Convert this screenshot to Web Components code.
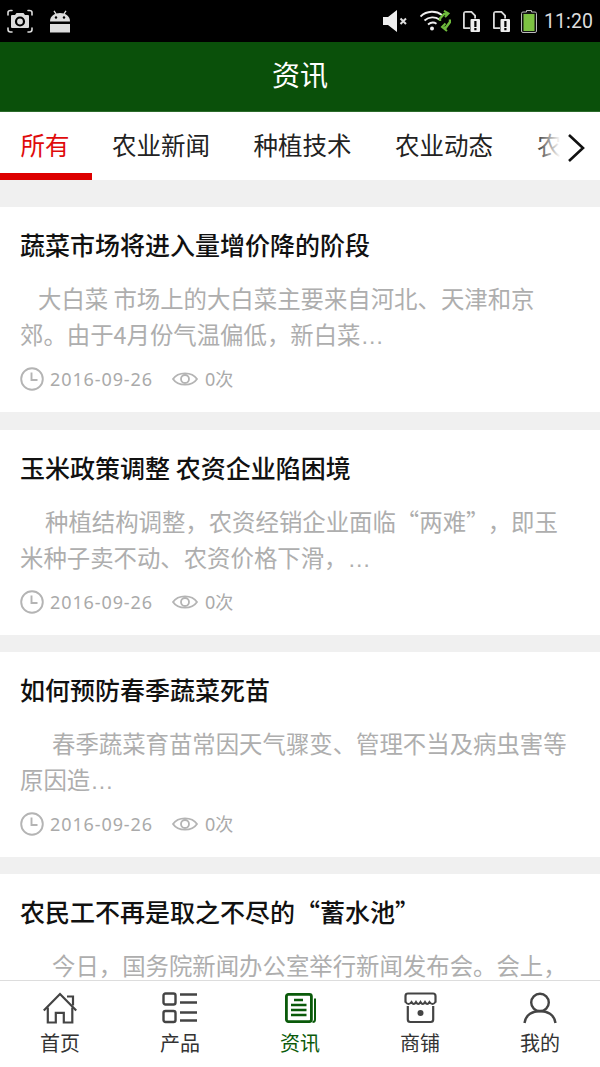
<!DOCTYPE html>
<html lang="zh"><head><meta charset="utf-8"><title>资讯</title>
<style>
html,body{margin:0;padding:0;background:#f0f0f0}
body{width:600px;height:1067px;overflow:hidden;font-family:"Noto Sans CJK SC","Noto Sans",sans-serif;display:flex;flex-direction:column}
main{flex:1;min-height:0;overflow:hidden;display:flex;flex-direction:column;gap:17px;padding-top:27px}
news-card:first-child{margin-bottom:1px}
.dots{font-family:"Liberation Sans",sans-serif;letter-spacing:0}
.fw{padding-right:10px}
</style></head><body>
<status-bar></status-bar>
<app-header>资讯</app-header>
<news-tabs></news-tabs>
<main>
<news-card indent="18" heading="蔬菜市场将进入量增价降的阶段" date="2016-09-26" views="0次">大白菜 市场上的大白菜主要来自河北、天津和京<br>郊。由于4月份气温偏低，新白菜<span class="dots">…</span></news-card>
<news-card indent="25" heading="玉米政策调整 农资企业陷困境" date="2016-09-26" views="0次">种植结构调整，农资经销企业面临<span class="fw">“两难”</span>，即玉<br>米种子卖不动、农资价格下滑，<span class="dots">…</span></news-card>
<news-card indent="32" heading="如何预防春季蔬菜死苗" date="2016-09-26" views="0次">春季蔬菜育苗常因天气骤变、管理不当及病虫害等<br>原因造<span class="dots">…</span></news-card>
<news-card indent="32" clip heading="农民工不再是取之不尽的“蓄水池”">今日，国务院新闻办公室举行新闻发布会。会上，</news-card>
</main>
<bottom-nav></bottom-nav>
<script>
const def=(name,html)=>customElements.define(name,class extends HTMLElement{
  connectedCallback(){ if(this.shadowRoot)return; const r=this.attachShadow({mode:"open"}); r.innerHTML=typeof html==="function"?html(this):html; }
});
const sim=`<svg style="margin-left:MLpx" width="18" height="22" viewBox="0 0 18 22"><path d="M1 4v14q0 1 1 1h6V17.300H2.800V2.800H9l3.200 3.200V8.500H14V5.200L9.800 1H4Q1 1 1 4z" fill="#ddd"/><rect x="8.500" y="9" width="9.500" height="13" rx="1" fill="#eee"/><path d="M12.300 11h2.200v6h-2.200zM12.300 18h2.200v2.200h-2.200z" fill="#000"/></svg>`;
def("status-bar",`<style>
:host{display:flex;align-items:center;flex:none;height:42px;background:#000;color:#ddd;box-sizing:border-box;padding:0 7px 0 7px}
svg{display:block;flex:none}
.sp{flex:1}
.t{font:19.500px/42px Roboto,sans-serif;letter-spacing:.1px;margin-left:7px;padding-top:1px}
</style>
<svg width="26" height="24" viewBox="0 0 26 24"><g fill="none" stroke="#ddd" stroke-width="1.600" stroke-linecap="round"><path d="M1 6V3.500Q1 1.500 3.500 1.500H5"/><path d="M21 1.500h1.500Q25 1.500 25 3.500V6"/><path d="M1 19v1.500Q1 23 3.500 23H5"/><path d="M21 23h1.500Q25 23 25 20.500V19"/></g><path d="M5 6h3l1.500-2h7L18 6h3q1 0 1 1v11q0 1-1 1H5q-1 0-1-1V7q0-1 1-1z" fill="#ddd"/><circle cx="13" cy="12.500" r="4" fill="none" stroke="#000" stroke-width="2.200"/></svg>
<svg style="margin-left:17px" width="20" height="23" viewBox="0 0 20 23"><path d="M4 .8l2 3M16 .8l-2 3" stroke="#ddd" stroke-width="1.300" fill="none"/><path d="M0 11.500C0 6 4.500 3 10 3s10 3 10 8.500z" fill="#ddd"/><circle cx="6" cy="7.500" r="1.200" fill="#000"/><circle cx="14" cy="7.500" r="1.200" fill="#000"/><path d="M0 14h20v8.500H0z" fill="#ddd"/></svg>
<span class="sp"></span>
<svg width="24" height="22" viewBox="0 0 24 22"><path d="M0 7h5l9-7v22l-9-7H0z" fill="#eee"/><path d="M17.500 8.500l5.500 5.500M23 8.500L17.500 14" stroke="#ddd" stroke-width="2"/></svg>
<svg style="margin-left:13px" width="31" height="22" viewBox="0 0 31 22"><g fill="none" stroke="#eee" stroke-width="1.900"><path d="M.5 6.500C7 .5 16 .5 22 5"/><path d="M4.500 10.500C9 6.500 15 6.500 19.500 9.500"/><path d="M8 14.500c3-2.400 6-2.400 8.500-.8"/></g><circle cx="12" cy="18.500" r="2" fill="#eee"/><g fill="none" stroke="#6fbb3c" stroke-width="2.400"><path d="M20 11V8.500l4-4.500 3-.5"/><path d="M24 .8L28.500 3.500 25 7" stroke-width="2"/><path d="M30 9.500v2.500l-4.500 6-1.500-1"/><path d="M27 21L22 17l3.500-3.500" stroke-width="2"/></g></svg>
${sim.replace("ML","11")}
${sim.replace("ML","12")}
<svg style="margin-left:11px" width="16" height="23" viewBox="0 0 16 23"><path d="M5.500 .5h5V2H14q1.500 0 1.500 1.500V21q0 1.500-1.500 1.500H2Q.5 22.500.5 21V3.500Q.5 2 2 2h3.500z" fill="#111" stroke="#bbb" stroke-width="1"/><rect x="2.500" y="4" width="11" height="17" fill="#7dc242"/></svg>
<span class="t">11:20</span>`);

def("app-header",`<style>
:host{display:block;flex:none;height:69px;background:#0a500a;color:#fff;text-align:center;font-size:28px;line-height:64px;border-bottom:1px solid #2b6b2b}
</style><slot></slot>`);

def("news-tabs",`<style>
:host{display:block;flex:none;height:68px;background:#fff;position:relative;overflow:hidden;font-size:24.500px;color:#222}
.row{display:flex;height:68px}
.tab{flex:none;box-sizing:border-box;width:141.500px;text-align:center;line-height:65px;white-space:nowrap}
.tab.on{width:92px;color:#e00b0b;border-bottom:7px solid #dd0000;padding-right:2px}
.tab.on+.tab{margin-left:-1.750px}
.tab.last{width:auto;padding-left:22.250px}
.fade{position:absolute;right:0;top:0;bottom:0;width:66px;background:linear-gradient(to right,rgba(255,255,255,0),#fff 40%);display:flex;align-items:center;justify-content:flex-end;padding:3px 14px 0 0;box-sizing:border-box}
svg{display:block}
</style>
<div class="row"><div class="tab on">所有</div><div class="tab">农业新闻</div><div class="tab">种植技术</div><div class="tab">农业动态</div><div class="tab last">农业</div></div>
<div class="fade"><svg width="19" height="30" viewBox="0 0 19 30"><path d="M2 2l14 13L2 28" fill="none" stroke="#111" stroke-width="2.600"/></svg></div>`);

const meta=h=>h.hasAttribute("date")?`<div class="meta"><svg width="24" height="24" viewBox="0 0 24 24"><circle cx="12" cy="12" r="10.800" fill="none" stroke="#b4b4b4" stroke-width="1.900"/><path d="M11.500 5.500v7.500h6" fill="none" stroke="#b4b4b4" stroke-width="1.900"/></svg><span class="d">${h.getAttribute("date")}</span><svg class="e" width="26" height="20" viewBox="0 0 26 20"><path d="M1 10C6 2.500 20 2.500 25 10C20 17.500 6 17.500 1 10z" fill="none" stroke="#b4b4b4" stroke-width="1.800"/><circle cx="13" cy="10" r="4" fill="none" stroke="#b4b4b4" stroke-width="1.800"/></svg><span class="v">${h.getAttribute("views")}</span></div>`:"";
def("news-card",h=>`<style>
:host{display:block;flex:none;background:#fff;height:205px;box-sizing:border-box;padding:21px 20px 0}
:host([clip]){height:auto;flex:1}
h2{margin:0;font-size:25px;font-weight:500;line-height:32px;color:#111;white-space:nowrap}
p{margin:19.500px 0 0;font-size:23.400px;line-height:36px;color:#aeaeae;text-indent:${h.getAttribute("indent")}px;overflow:hidden;height:72px;white-space:nowrap}
:host([clip]) p{line-height:28px;height:28px;margin-top:23.500px}
.meta{display:flex;align-items:center;height:30px;margin-top:12.500px;color:#aaa;font:18px/30px "Noto Sans","Noto Sans CJK SC",sans-serif}
svg{display:block;flex:none}
.d{margin-left:6px;width:103px;white-space:nowrap;letter-spacing:.9px}
.e{margin-left:19px}
.v{margin-left:7px}
</style>
<h2>${h.getAttribute("heading")}</h2>
<p><slot></slot></p>
${meta(h)}`);

const I={
home:[34,`<g fill="none" stroke="#444" stroke-width="2.200"><path d="M.8 18.500L17 2l16.200 16.500"/><path d="M24 4.500h6v9"/><path d="M4.800 15.500V30.500h8V20.800h8V30.500h8.500V15.500"/></g>`],
list:[36,`<g fill="none" stroke="#444" stroke-width="2.400"><rect x="1.500" y="1.500" width="12" height="11" rx="2"/><rect x="1.500" y="19" width="12" height="11" rx="2"/></g><path d="M18 2.500h17M18 10.500h17M18 20.500h17M18 28.500h17" stroke="#444" stroke-width="2.400" fill="none"/>`],
news:[32,`<rect x="2.400" y="2.400" width="25" height="27.200" rx="2" fill="none" stroke="#0a5a0a" stroke-width="2.800"/><path d="M31 6.500v21q0 2.500-2.500 2.500" fill="none" stroke="#0a5a0a" stroke-width="2"/><path d="M10 8h9M7 13h15.500M7 18h15.500M7 23h15.500" fill="none" stroke="#0a5a0a" stroke-width="2.400"/>`],
shop:[33,`<path d="M1.500 10.500V4Q1.500 1.500 4 1.500h25q2.500 0 2.500 2.500v6.500" fill="none" stroke="#444" stroke-width="2.200"/><path d="M3.800 14v13.500q0 2.500 2.500 2.500h20.400q2.500 0 2.500-2.500V14" fill="none" stroke="#444" stroke-width="2.200"/><path d="M1.500 10q3 4 6 0 2.250 4 4.500 0 2.250 4 4.500 0 2.250 4 4.500 0 2.250 4 4.500 0 3 4 6 0" fill="none" stroke="#444" stroke-width="2"/><circle cx="16.500" cy="21" r="3" fill="#444"/>`],
user:[34,`<circle cx="17" cy="10.500" r="8.800" fill="none" stroke="#444" stroke-width="2.400"/><path d="M1.500 31C2.500 22.500 10 19 17 19s14.500 3.500 15.500 12" fill="none" stroke="#444" stroke-width="2.400"/>`]
};
def("nav-item",h=>{const [w,s]=I[h.getAttribute("icon")];return `<style>
:host{display:flex;flex:1;flex-direction:column;align-items:center;color:${h.hasAttribute("active")?"#0a5a0a":"#333"};font-size:20px;line-height:28px}
svg{display:block;margin:11px 0 5px}
</style><svg viewBox="0 0 ${w} 32" width="${w}" height="32">${s}</svg><slot></slot>`});
def("bottom-nav",`<style>
:host{display:flex;flex:none;height:87px;box-sizing:border-box;background:#fff;border-top:1px solid #ddd}
</style>
<nav-item icon="home">首页</nav-item><nav-item icon="list">产品</nav-item><nav-item icon="news" active>资讯</nav-item><nav-item icon="shop">商铺</nav-item><nav-item icon="user">我的</nav-item>`);
</script>
</body></html>
